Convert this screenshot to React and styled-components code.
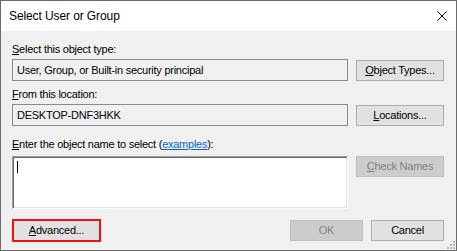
import React from "react";
import styled, { createGlobalStyle } from "styled-components";

const GlobalStyle = createGlobalStyle`
  html, body {
    margin: 0;
    padding: 0;
    background: #ffffff;
  }
  * {
    box-sizing: border-box;
  }
`;

const Window = styled.div`
  width: 457px;
  height: 251px;
  border: 1px solid #6b6b6b;
  background: #f0f0f0;
  display: flex;
  flex-direction: column;
  position: relative;
  font-family: "Liberation Sans", Arial, sans-serif;
  font-size: 11px;
  letter-spacing: -0.25px;
  color: #000;
`;

const TitleBar = styled.div`
  height: 30px;
  background: #ffffff;
  display: flex;
  align-items: center;
  justify-content: space-between;
  padding: 0 9px 0 8px;
`;

const Title = styled.div`
  font-family: "Liberation Sans", Arial, sans-serif;
  font-size: 12px;
  letter-spacing: -0.1px;
  padding-bottom: 1px;
`;

const CloseIcon = styled.svg`
  width: 10px;
  height: 10px;
`;

const Body = styled.div`
  flex: 1;
  padding: 12px 11px 0 11px;
  display: grid;
  grid-template-columns: 336px 88px;
  column-gap: 8px;
  align-content: start;
`;

const Label = styled.div`
  grid-column: 1 / span 2;
  height: 13px;
  line-height: 13px;
  margin-top: ${(p) => p.$top || 0}px;
  margin-bottom: ${(p) => p.$bottom || 3}px;
`;

const U = styled.span`
  text-decoration: underline;
  text-underline-offset: 1px;
`;

const Link = styled.span`
  color: #0066cc;
  text-decoration: underline;
  text-underline-offset: 1px;
`;

const ReadBox = styled.div`
  height: 22px;
  border: 1px solid #8a8a8a;
  background: #f0f0f0;
  display: flex;
  align-items: center;
  padding-left: 4px;
`;

const Button = styled.div`
  height: 21px;
  margin-top: ${(p) => (p.$offset ? 1 : 0)}px;
  border: 1px solid ${(p) => (p.$disabled ? "#bfbfbf" : "#adadad")};
  background: ${(p) => (p.$disabled ? "#cccccc" : "#e1e1e1")};
  color: ${(p) => (p.$disabled ? "#838383" : "#000")};
  display: flex;
  align-items: center;
  justify-content: center;
  padding-bottom: 1px;
`;

const TextArea = styled.div`
  height: 53px;
  background: #ffffff;
  border-top: 1px solid #a0a0a0;
  border-left: 1px solid #a0a0a0;
  border-right: 1px solid #ffffff;
  border-bottom: 1px solid #ffffff;
  box-shadow: inset 1px 1px 0 #696969, inset -1px -1px 0 #e3e3e3;
  padding: 4px 0 0 4px;
`;

const Caret = styled.div`
  width: 1px;
  height: 12px;
  background: #000;
`;

const Footer = styled.div`
  grid-column: 1 / span 2;
  margin-top: 10px;
  display: flex;
  align-items: center;
`;

const AdvancedButton = styled.div`
  width: 89px;
  height: 23px;
  border: 2px solid #ee1111;
  background: #e1e1e1;
  display: flex;
  align-items: center;
  justify-content: center;
  padding-bottom: 1px;
`;

const Spacer = styled.div`
  flex: 1;
`;

const DialogButton = styled(Button)`
  width: 73px;
  margin-left: ${(p) => p.$gap || 0}px;
`;

const Grip = styled.svg`
  position: absolute;
  right: 1px;
  bottom: 1px;
  width: 8px;
  height: 8px;
`;

const App = () => {
  return (
    <>
      <GlobalStyle />
      <Window>
        <TitleBar>
          <Title>Select User or Group</Title>
          <CloseIcon viewBox="0 0 10 10">
            <path d="M0.5 0.5 L9.5 9.5 M9.5 0.5 L0.5 9.5" stroke="#000" strokeWidth="1" fill="none" />
          </CloseIcon>
        </TitleBar>
        <Body>
          <Label>
            <U>S</U>elect this object type:
          </Label>
          <ReadBox>User, Group, or Built-in security principal</ReadBox>
          <Button $offset>
            <U>O</U>bject Types...
          </Button>

          <Label $top={7}>
            <U>F</U>rom this location:
          </Label>
          <ReadBox>DESKTOP-DNF3HKK</ReadBox>
          <Button $offset>
            <U>L</U>ocations...
          </Button>

          <Label $top={12} $bottom={5}>
            <U>E</U>nter the object name to select (<Link>examples</Link>):
          </Label>
          <TextArea>
            <Caret />
          </TextArea>
          <Button $disabled>
            <U>C</U>heck Names
          </Button>

          <Footer>
            <AdvancedButton>
              <U>A</U>dvanced...
            </AdvancedButton>
            <Spacer />
            <DialogButton $disabled>OK</DialogButton>
            <DialogButton $gap={8}>Cancel</DialogButton>
          </Footer>
        </Body>
        <Grip viewBox="0 0 8 8">
          {[
            [6, 0],
            [6, 3],
            [3, 3],
            [6, 6],
            [3, 6],
            [0, 6],
          ].map(([x, y]) => (
            <rect key={`${x}-${y}`} x={x} y={y} width="2" height="2" fill="#b8b8b8" />
          ))}
        </Grip>
      </Window>
    </>
  );
};

export default App;
